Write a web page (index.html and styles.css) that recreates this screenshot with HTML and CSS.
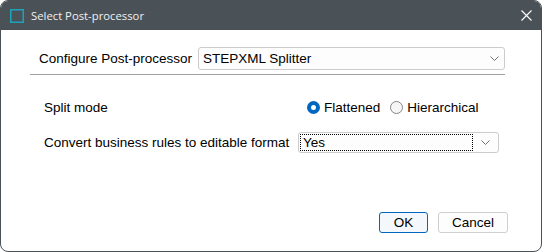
FILE: index.html
```html
<!DOCTYPE html>
<html lang="en">
<head>
    <meta charset="UTF-8">
    <title>Select Post-processor</title>
    <link rel="stylesheet" href="styles.css">
</head>
<body>
    <div class="window">
        <!-- Title bar -->
        <div class="titlebar">
            <svg class="app-icon" width="14" height="14" viewBox="0 0 14 14">
                <rect x="0.75" y="0.75" width="12.5" height="12.5" fill="none" stroke="#1ba3b8" stroke-width="1.5"/>
            </svg>
            <span class="title">Select Post-processor</span>
            <svg class="close-icon" width="11" height="11" viewBox="0 0 11 11">
                <path d="M0.5 0.5 L10.5 10.5 M10.5 0.5 L0.5 10.5" stroke="#ffffff" stroke-width="1.1"/>
            </svg>
        </div>

        <div class="content">
            <!-- Post-processor picker -->
            <div class="config-row">
                <span class="label">Configure Post-processor</span>
                <div class="combo combo-main">
                    <span class="combo-text">STEPXML Splitter</span>
                    <svg class="chevron" width="9" height="5" viewBox="0 0 9 5">
                        <path d="M0.5 0.5 L4.5 4.5 L8.5 0.5" fill="none" stroke="#707070" stroke-width="1"/>
                    </svg>
                </div>
            </div>
            <div class="separator"></div>

            <!-- Splitter options -->
            <div class="options">
                <span class="label">Split mode</span>
                <div class="radios">
                    <span class="radio"><span class="dot checked"></span>Flattened</span>
                    <span class="radio"><span class="dot"></span>Hierarchical</span>
                </div>
                <span class="label">Convert business rules to editable format</span>
                <div class="combo combo-small">
                    <span class="focus-box">Yes</span>
                    <svg class="chevron" width="9" height="5" viewBox="0 0 9 5">
                        <path d="M0.5 0.5 L4.5 4.5 L8.5 0.5" fill="none" stroke="#707070" stroke-width="1"/>
                    </svg>
                </div>
            </div>

            <!-- Dialog buttons -->
            <div class="footer">
                <button class="btn btn-default">OK</button>
                <button class="btn">Cancel</button>
            </div>
        </div>
    </div>
</body>
</html>
```

FILE: styles.css
```css
/* Dialog window */
body {
    margin: 0;
    background: #ffffff;
    font-family: "Liberation Sans", Arial, sans-serif;
}

.window {
    width: 542px;
    height: 252px;
    box-sizing: border-box;
    border: 1px solid #4b5257;
    border-radius: 8px;
    overflow: hidden;
    display: flex;
    flex-direction: column;
    background: #ffffff;
}

.titlebar {
    height: 29px;
    flex-shrink: 0;
    background: #4b5257;
    display: flex;
    align-items: center;
    padding-left: 9px;
    padding-right: 9px;
}

.app-icon {
    margin-right: 7px;
}

.title {
    font-family: "Open Sans", "Noto Sans", sans-serif;
    font-size: 11.3px;
    color: #f0f0f0;
}

.close-icon {
    margin-left: auto;
}

/* Body of the dialog */
.content {
    flex: 1;
    display: flex;
    flex-direction: column;
    padding: 17px 33px 18px 29px;
    font-size: 13.5px;
    color: #000000;
}

.label {
    white-space: nowrap;
}

.config-row {
    display: flex;
    align-items: center;
    gap: 6px;
    margin: 0 3px 0 9px;
}

.combo {
    display: flex;
    align-items: center;
    box-sizing: border-box;
    border: 1px solid #cccccc;
    border-radius: 3px;
    background: #fdfdfd;
}

.combo-main {
    flex: 1;
    height: 23px;
    padding: 0 5px 0 4px;
}

.combo-text {
    flex: 1;
}

.separator {
    height: 1px;
    background: #a0a0a0;
    margin: 4px 3px 0 0;
}

.options {
    display: grid;
    grid-template-columns: 254px 1fr;
    grid-auto-rows: 21px;
    row-gap: 14px;
    align-items: center;
    margin-top: 22px;
    padding: 0 9px 0 14px;
}

.radios {
    display: flex;
    align-items: center;
    gap: 10px;
    padding-left: 9px;
}

.radio {
    display: flex;
    align-items: center;
    gap: 4px;
}

.dot {
    width: 13px;
    height: 13px;
    box-sizing: border-box;
    border-radius: 50%;
    border: 1px solid #858585;
    background: #f6f6f6;
}

.dot.checked {
    border: 4px solid #0067c0;
    background: #ffffff;
}

.combo-small {
    height: 21px;
    padding: 1px 8px 1px 1px;
}

.focus-box {
    flex: 1;
    height: 100%;
    box-sizing: border-box;
    border: 1px dotted #000000;
    padding-left: 2px;
    margin-right: 8px;
    display: flex;
    align-items: center;
}

/* Buttons */
.footer {
    margin-top: auto;
    display: flex;
    justify-content: flex-end;
    gap: 10px;
}

.btn {
    height: 21px;
    font-family: "Liberation Sans", Arial, sans-serif;
    font-size: 13.5px;
    color: #000000;
    background: #fdfdfd;
    border: 1px solid #d0d0d0;
    border-radius: 3px;
    padding: 0;
    width: 70px;
}

.btn-default {
    width: 49px;
    border-color: #0067c0;
    background: #f4f8fc;
}
```
